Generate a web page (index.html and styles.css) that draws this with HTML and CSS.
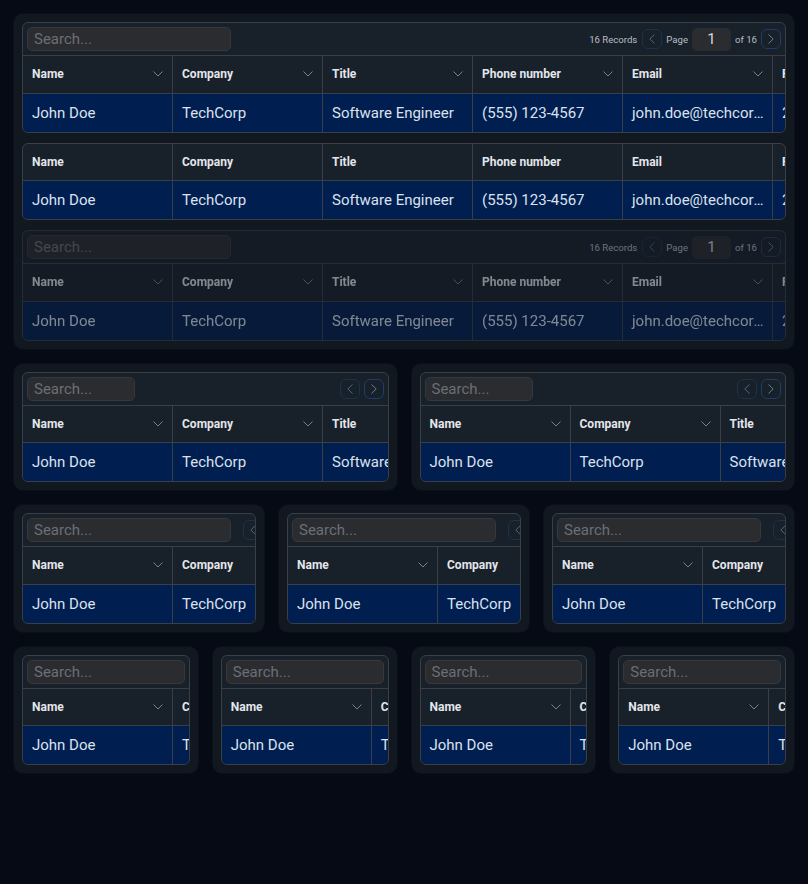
FILE: index.html
```html
<!DOCTYPE html>
<html lang="en">
<head>
<meta charset="utf-8">
<title>Data tables</title>
<link rel="stylesheet" href="styles.css">
</head>
<body>
<div class="page">

  <div class="grid g1">
    <div class="card stack">
      <!-- Table 1: full toolbar -->
      <div class="dt">
        <div class="toolbar">
          <input class="search" placeholder="Search...">
          <div class="pager">
            <span class="ptext">16 Records</span>
            <span class="pbtn prev"><svg viewBox="0 0 6 10"><path d="M5.5 0.5 L0.8 5 L5.5 9.5"/></svg></span>
            <span class="ptext">Page</span>
            <span class="pinput">1</span>
            <span class="ptext">of 16</span>
            <span class="pbtn"><svg viewBox="0 0 6 10"><path d="M0.5 0.5 L5.2 5 L0.5 9.5"/></svg></span>
          </div>
        </div>
        <div class="hrow">
          <div class="hc"><span>Name</span><svg class="chev" viewBox="0 0 10 6"><path d="M0.5 0.5 L5 5 L9.5 0.5"/></svg></div>
          <div class="hc"><span>Company</span><svg class="chev" viewBox="0 0 10 6"><path d="M0.5 0.5 L5 5 L9.5 0.5"/></svg></div>
          <div class="hc"><span>Title</span><svg class="chev" viewBox="0 0 10 6"><path d="M0.5 0.5 L5 5 L9.5 0.5"/></svg></div>
          <div class="hc"><span>Phone number</span><svg class="chev" viewBox="0 0 10 6"><path d="M0.5 0.5 L5 5 L9.5 0.5"/></svg></div>
          <div class="hc"><span>Email</span><svg class="chev" viewBox="0 0 10 6"><path d="M0.5 0.5 L5 5 L9.5 0.5"/></svg></div>
          <div class="hc"><span>Registered</span><svg class="chev" viewBox="0 0 10 6"><path d="M0.5 0.5 L5 5 L9.5 0.5"/></svg></div>
        </div>
        <div class="brow">
          <div class="bc">John Doe</div>
          <div class="bc">TechCorp</div>
          <div class="bc">Software Engineer</div>
          <div class="bc">(555) 123-4567</div>
          <div class="bc">john.doe@techcorp.com</div>
          <div class="bc">2023-01-15</div>
        </div>
      </div>

      <!-- Table 2: no toolbar, no sort chevrons -->
      <div class="dt">
        <div class="hrow">
          <div class="hc"><span>Name</span></div>
          <div class="hc"><span>Company</span></div>
          <div class="hc"><span>Title</span></div>
          <div class="hc"><span>Phone number</span></div>
          <div class="hc"><span>Email</span></div>
          <div class="hc"><span>Registered</span></div>
        </div>
        <div class="brow">
          <div class="bc">John Doe</div>
          <div class="bc">TechCorp</div>
          <div class="bc">Software Engineer</div>
          <div class="bc">(555) 123-4567</div>
          <div class="bc">john.doe@techcorp.com</div>
          <div class="bc">2023-01-15</div>
        </div>
      </div>

      <!-- Table 3: disabled -->
      <div class="dt disabled">
        <div class="toolbar">
          <input class="search" placeholder="Search..." disabled>
          <div class="pager">
            <span class="ptext">16 Records</span>
            <span class="pbtn prev"><svg viewBox="0 0 6 10"><path d="M5.5 0.5 L0.8 5 L5.5 9.5"/></svg></span>
            <span class="ptext">Page</span>
            <span class="pinput">1</span>
            <span class="ptext">of 16</span>
            <span class="pbtn"><svg viewBox="0 0 6 10"><path d="M0.5 0.5 L5.2 5 L0.5 9.5"/></svg></span>
          </div>
        </div>
        <div class="hrow">
          <div class="hc"><span>Name</span><svg class="chev" viewBox="0 0 10 6"><path d="M0.5 0.5 L5 5 L9.5 0.5"/></svg></div>
          <div class="hc"><span>Company</span><svg class="chev" viewBox="0 0 10 6"><path d="M0.5 0.5 L5 5 L9.5 0.5"/></svg></div>
          <div class="hc"><span>Title</span><svg class="chev" viewBox="0 0 10 6"><path d="M0.5 0.5 L5 5 L9.5 0.5"/></svg></div>
          <div class="hc"><span>Phone number</span><svg class="chev" viewBox="0 0 10 6"><path d="M0.5 0.5 L5 5 L9.5 0.5"/></svg></div>
          <div class="hc"><span>Email</span><svg class="chev" viewBox="0 0 10 6"><path d="M0.5 0.5 L5 5 L9.5 0.5"/></svg></div>
          <div class="hc"><span>Registered</span><svg class="chev" viewBox="0 0 10 6"><path d="M0.5 0.5 L5 5 L9.5 0.5"/></svg></div>
        </div>
        <div class="brow">
          <div class="bc">John Doe</div>
          <div class="bc">TechCorp</div>
          <div class="bc">Software Engineer</div>
          <div class="bc">(555) 123-4567</div>
          <div class="bc">john.doe@techcorp.com</div>
          <div class="bc">2023-01-15</div>
        </div>
      </div>
    </div>
  </div>

  <!-- Two columns -->
  <div class="grid g2">
    <div class="card">
      <div class="dt">
        <div class="toolbar">
          <input class="search sm" placeholder="Search...">
          <div class="pager">
            <span class="pbtn prev"><svg viewBox="0 0 6 10"><path d="M5.5 0.5 L0.8 5 L5.5 9.5"/></svg></span>
            <span class="pbtn"><svg viewBox="0 0 6 10"><path d="M0.5 0.5 L5.2 5 L0.5 9.5"/></svg></span>
          </div>
        </div>
        <div class="hrow">
          <div class="hc"><span>Name</span><svg class="chev" viewBox="0 0 10 6"><path d="M0.5 0.5 L5 5 L9.5 0.5"/></svg></div>
          <div class="hc"><span>Company</span><svg class="chev" viewBox="0 0 10 6"><path d="M0.5 0.5 L5 5 L9.5 0.5"/></svg></div>
          <div class="hc"><span>Title</span><svg class="chev" viewBox="0 0 10 6"><path d="M0.5 0.5 L5 5 L9.5 0.5"/></svg></div>
        </div>
        <div class="brow">
          <div class="bc">John Doe</div>
          <div class="bc">TechCorp</div>
          <div class="bc">Software Engineer</div>
        </div>
      </div>
    </div>
    <div class="card">
      <div class="dt">
        <div class="toolbar">
          <input class="search sm" placeholder="Search...">
          <div class="pager">
            <span class="pbtn prev"><svg viewBox="0 0 6 10"><path d="M5.5 0.5 L0.8 5 L5.5 9.5"/></svg></span>
            <span class="pbtn"><svg viewBox="0 0 6 10"><path d="M0.5 0.5 L5.2 5 L0.5 9.5"/></svg></span>
          </div>
        </div>
        <div class="hrow">
          <div class="hc"><span>Name</span><svg class="chev" viewBox="0 0 10 6"><path d="M0.5 0.5 L5 5 L9.5 0.5"/></svg></div>
          <div class="hc"><span>Company</span><svg class="chev" viewBox="0 0 10 6"><path d="M0.5 0.5 L5 5 L9.5 0.5"/></svg></div>
          <div class="hc"><span>Title</span><svg class="chev" viewBox="0 0 10 6"><path d="M0.5 0.5 L5 5 L9.5 0.5"/></svg></div>
        </div>
        <div class="brow">
          <div class="bc">John Doe</div>
          <div class="bc">TechCorp</div>
          <div class="bc">Software Engineer</div>
        </div>
      </div>
    </div>
  </div>

  <!-- Three columns -->
  <div class="grid g3">
    <div class="card">
      <div class="dt">
        <div class="toolbar">
          <input class="search" placeholder="Search...">
          <div class="pager">
            <span class="pbtn prev"><svg viewBox="0 0 6 10"><path d="M5.5 0.5 L0.8 5 L5.5 9.5"/></svg></span>
            <span class="pbtn"><svg viewBox="0 0 6 10"><path d="M0.5 0.5 L5.2 5 L0.5 9.5"/></svg></span>
          </div>
        </div>
        <div class="hrow">
          <div class="hc"><span>Name</span><svg class="chev" viewBox="0 0 10 6"><path d="M0.5 0.5 L5 5 L9.5 0.5"/></svg></div>
          <div class="hc"><span>Company</span><svg class="chev" viewBox="0 0 10 6"><path d="M0.5 0.5 L5 5 L9.5 0.5"/></svg></div>
        </div>
        <div class="brow">
          <div class="bc">John Doe</div>
          <div class="bc">TechCorp</div>
        </div>
      </div>
    </div>
    <div class="card">
      <div class="dt">
        <div class="toolbar">
          <input class="search" placeholder="Search...">
          <div class="pager">
            <span class="pbtn prev"><svg viewBox="0 0 6 10"><path d="M5.5 0.5 L0.8 5 L5.5 9.5"/></svg></span>
            <span class="pbtn"><svg viewBox="0 0 6 10"><path d="M0.5 0.5 L5.2 5 L0.5 9.5"/></svg></span>
          </div>
        </div>
        <div class="hrow">
          <div class="hc"><span>Name</span><svg class="chev" viewBox="0 0 10 6"><path d="M0.5 0.5 L5 5 L9.5 0.5"/></svg></div>
          <div class="hc"><span>Company</span><svg class="chev" viewBox="0 0 10 6"><path d="M0.5 0.5 L5 5 L9.5 0.5"/></svg></div>
        </div>
        <div class="brow">
          <div class="bc">John Doe</div>
          <div class="bc">TechCorp</div>
        </div>
      </div>
    </div>
    <div class="card">
      <div class="dt">
        <div class="toolbar">
          <input class="search" placeholder="Search...">
          <div class="pager">
            <span class="pbtn prev"><svg viewBox="0 0 6 10"><path d="M5.5 0.5 L0.8 5 L5.5 9.5"/></svg></span>
            <span class="pbtn"><svg viewBox="0 0 6 10"><path d="M0.5 0.5 L5.2 5 L0.5 9.5"/></svg></span>
          </div>
        </div>
        <div class="hrow">
          <div class="hc"><span>Name</span><svg class="chev" viewBox="0 0 10 6"><path d="M0.5 0.5 L5 5 L9.5 0.5"/></svg></div>
          <div class="hc"><span>Company</span><svg class="chev" viewBox="0 0 10 6"><path d="M0.5 0.5 L5 5 L9.5 0.5"/></svg></div>
        </div>
        <div class="brow">
          <div class="bc">John Doe</div>
          <div class="bc">TechCorp</div>
        </div>
      </div>
    </div>
  </div>

  <!-- Four columns -->
  <div class="grid g4">
    <div class="card">
      <div class="dt">
        <div class="toolbar">
          <input class="search full" placeholder="Search...">
        </div>
        <div class="hrow">
          <div class="hc"><span>Name</span><svg class="chev" viewBox="0 0 10 6"><path d="M0.5 0.5 L5 5 L9.5 0.5"/></svg></div>
          <div class="hc"><span>Company</span></div>
        </div>
        <div class="brow">
          <div class="bc">John Doe</div>
          <div class="bc">TechCorp</div>
        </div>
      </div>
    </div>
    <div class="card">
      <div class="dt">
        <div class="toolbar">
          <input class="search full" placeholder="Search...">
        </div>
        <div class="hrow">
          <div class="hc"><span>Name</span><svg class="chev" viewBox="0 0 10 6"><path d="M0.5 0.5 L5 5 L9.5 0.5"/></svg></div>
          <div class="hc"><span>Company</span></div>
        </div>
        <div class="brow">
          <div class="bc">John Doe</div>
          <div class="bc">TechCorp</div>
        </div>
      </div>
    </div>
    <div class="card">
      <div class="dt">
        <div class="toolbar">
          <input class="search full" placeholder="Search...">
        </div>
        <div class="hrow">
          <div class="hc"><span>Name</span><svg class="chev" viewBox="0 0 10 6"><path d="M0.5 0.5 L5 5 L9.5 0.5"/></svg></div>
          <div class="hc"><span>Company</span></div>
        </div>
        <div class="brow">
          <div class="bc">John Doe</div>
          <div class="bc">TechCorp</div>
        </div>
      </div>
    </div>
    <div class="card">
      <div class="dt">
        <div class="toolbar">
          <input class="search full" placeholder="Search...">
        </div>
        <div class="hrow">
          <div class="hc"><span>Name</span><svg class="chev" viewBox="0 0 10 6"><path d="M0.5 0.5 L5 5 L9.5 0.5"/></svg></div>
          <div class="hc"><span>Company</span></div>
        </div>
        <div class="brow">
          <div class="bc">John Doe</div>
          <div class="bc">TechCorp</div>
        </div>
      </div>
    </div>
  </div>

</div>
</body>
</html>
```

FILE: styles.css
```css
html {
  background: #050a14;
}

body {
  margin: 0;
  background: #050a14;
  font-family: Roboto, "Liberation Sans", Arial, sans-serif;
}

.page {
  padding: 13px;
  display: flex;
  flex-direction: column;
  gap: 13px;
}

.grid {
  display: grid;
  gap: 13px;
}

.g1 { grid-template-columns: minmax(0, 1fr); }
.g2 { grid-template-columns: repeat(2, minmax(0, 1fr)); }
.g3 { grid-template-columns: repeat(3, minmax(0, 1fr)); }
.g4 { grid-template-columns: repeat(4, minmax(0, 1fr)); }

.card {
  min-width: 0;
  background: #111820;
  border: 1px solid #0b1019;
  border-radius: 10px;
  padding: 8px;
}

.stack {
  display: flex;
  flex-direction: column;
  gap: 10px;
}

.dt {
  border: 1px solid #3a3f47;
  border-radius: 6px;
  overflow: hidden;
  background: #18202a;
}

.dt.disabled {
  opacity: 0.55;
}

.toolbar {
  height: 33px;
  box-sizing: border-box;
  border-bottom: 1px solid #3a3f47;
  padding: 4px;
  display: flex;
  align-items: center;
  justify-content: space-between;
  gap: 12px;
}

.search {
  flex: none;
  width: 204px;
  height: 24px;
  box-sizing: border-box;
  margin: 0;
  background: #2a2c30;
  border: 1px solid #35383d;
  border-radius: 5px;
  padding: 0 6px;
  font-family: Roboto, "Liberation Sans", Arial, sans-serif;
  font-size: 15px;
  color: #d4d7dc;
  outline: none;
}

.search::placeholder {
  color: #6b6f77;
  opacity: 1;
}

.search.sm {
  width: 108px;
}

.search.full {
  width: 100%;
}

.pager {
  flex: none;
  display: flex;
  align-items: center;
  gap: 4px;
}

.ptext {
  font-size: 9.6px;
  color: #b9bec6;
  white-space: nowrap;
}

.ptext:first-child {
  margin-right: 1px;
}

.pbtn {
  width: 20px;
  height: 20px;
  box-sizing: border-box;
  border: 1px solid #1f3d68;
  border-radius: 6px;
  display: flex;
  align-items: center;
  justify-content: center;
}

.pbtn.prev {
  border-color: #19324f;
}

.pbtn svg {
  width: 6px;
  height: 10px;
  fill: none;
  stroke: #637b9c;
  stroke-width: 1;
}

.pbtn.prev svg {
  stroke: #4f6480;
}

.pinput {
  width: 39px;
  height: 23px;
  background: #2a2c30;
  border-radius: 5px;
  font-size: 15px;
  line-height: 23px;
  text-align: center;
  color: #d4d7dc;
}

.hrow {
  display: flex;
  height: 37.5px;
  box-sizing: border-box;
  border-bottom: 1px solid #3a3f47;
}

.hc {
  flex: 0 0 150px;
  box-sizing: border-box;
  border-right: 1px solid #3a3f47;
  padding: 0 9px;
  display: flex;
  align-items: center;
  justify-content: space-between;
  font-size: 12px;
  font-weight: 700;
  color: #e3e6ea;
  white-space: nowrap;
}

.chev {
  flex: none;
  width: 10px;
  height: 6px;
  fill: none;
  stroke: #858b94;
  stroke-width: 0.9;
}

.brow {
  display: flex;
  height: 38px;
  background: #001e4f;
}

.bc {
  flex: 0 0 150px;
  box-sizing: border-box;
  border-right: 1px solid #3a3f47;
  padding: 0 6px 0 9px;
  font-size: 15px;
  line-height: 38px;
  color: #dbe2ee;
  white-space: nowrap;
  overflow: hidden;
  text-overflow: ellipsis;
}
```
